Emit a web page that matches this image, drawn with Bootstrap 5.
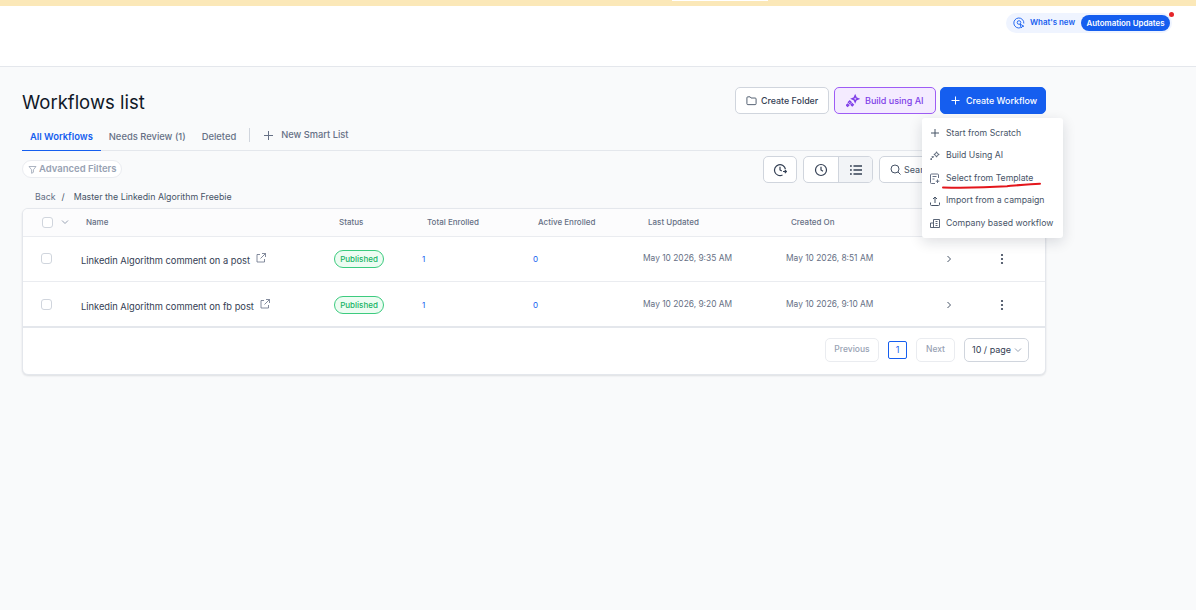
<!DOCTYPE html>
<html lang="en">
<head>
<meta charset="UTF-8">
<meta name="viewport" content="width=device-width, initial-scale=1.0">
<title>Workflows list</title>
<link href="https://cdn.jsdelivr.net/npm/bootstrap@5.3.0/dist/css/bootstrap.min.css" rel="stylesheet">
<style>
html, body { height: 100%; overflow: hidden; }
body { font-family: Inter, "Liberation Sans", sans-serif; font-size: 9px; background: #f9fafb; color: #344054; }
svg { display: block; flex: none; }
.top-strip { height: 6px; background: #fbe8b8; }
.top-strip-gap { width: 96px; height: 1px; background: #fff; margin-left: 672px; }
.app-header { height: 61px; background: #fff; border-bottom: 1px solid #e4e7ec; padding: 7px 24px 0 0; }
.news-pill { position: relative; height: 20px; width: 166px; border-radius: 10px; background: #eff4ff; padding: 0 2px 0 7px; font-size: 7.9px; font-weight: 600; color: #155eef; white-space: nowrap; }
.news-label { margin-left: 5px; }
.news-dot { position: absolute; top: -1px; right: -2px; width: 5px; height: 5px; border-radius: 50%; background: #e5252a; }
.news-tag { background: #155eef; color: #fff; border-radius: 8px; height: 16px; width: 89px; text-align: center; line-height: 16px; margin-left: auto; }
.page-body { position: relative; padding: 20px 0 0 22px; width: 1046px; }
.page-title { font-size: 18.5px; font-weight: 400; color: #101828; margin: 0; line-height: 24px; padding-top: 3px; }
.act-btn { height: 27px; border-radius: 5px; font-size: 8.9px; font-weight: 500; padding: 0 10px; display: flex; align-items: center; gap: 5px; white-space: nowrap; }
.act-light { background: #fff; border: 1px solid #d0d5dd; color: #344054; width: 94px; margin-right: 1px; gap: 4px; }
.act-ai { background: #f4ebff; border: 1px solid #9e5cf5; color: #7f3ee8; width: 102px; padding-left: 11px; font-size: 9px; }
.act-main { background: #155eef; border: 1px solid #155eef; color: #fff; width: 106px; gap: 6px; }
.tab-row { height: 25px; margin-top: 12px; border-bottom: 1px solid #e4e7ec; }
.tab-item { padding: 2px 8px 0; height: 25px; font-size: 9.4px; font-weight: 500; color: #667085; line-height: 17px; white-space: nowrap; }
.tab-on { color: #155eef; font-weight: 600; border-bottom: 1px solid #155eef; }
.tab-sep { width: 1px; height: 14px; background: #d0d5dd; margin: 2px 14px 0 5px; }
.smart-link { color: #667085; font-weight: 500; font-size: 9.3px; gap: 8px; height: 18px; }
.filter-row { height: 38px; padding-top: 5px; }
.filter-pill { height: 18px; width: 100px; border: 1px solid #eaecf0; background: #fff; border-radius: 9px; color: #98a2b3; font-size: 9.5px; font-weight: 600; gap: 2px; padding-left: 5px; margin-top: 4px; white-space: nowrap; }
.tool-box { height: 27px; border: 1px solid #d0d5dd; border-radius: 5px; background: #fff; align-items: center; justify-content: center; }
.tool-single { width: 34px; }
.tool-cell { width: 34px; height: 100%; display: flex; align-items: center; justify-content: center; }
.tool-cell + .tool-cell { background: #f2f4f7; border-left: 1px solid #d0d5dd; border-radius: 0 4px 4px 0; }
.tool-wrap { gap: 6px; }
.search-box { width: 167px; gap: 3px; padding-left: 10px; justify-content: flex-start; color: #475467; font-size: 9px; white-space: nowrap; }
.crumbs { height: 19px; padding-left: 13px; color: #475467; font-size: 8.8px; line-height: 15px; }
.crumbs .back { color: #667085; margin-right: 6px; }
.crumbs .slash { margin-right: 9px; }
.list-card { background: #fff; border: 1px solid #e4e7ec; border-radius: 6px; box-shadow: 0 1px 2px rgba(16,24,40,.12); height: 167px; overflow: hidden; }
.wf-table { table-layout: fixed; width: 1023px; border-collapse: collapse; }
.wf-table th { height: 27px; font-size: 8px; font-weight: 500; color: #667085; border-bottom: 1px solid #eaecf0; background: #fcfcfd; vertical-align: middle; }
.wf-table td { height: 45px; border-bottom: 1px solid #eaecf0; vertical-align: middle; font-size: 8.4px; color: #667085; padding: 0; }
.wf-table tr:last-child td { height: 46px; padding-top: 2px; border-bottom: 2px solid #e4e7ec; }
.wf-table td.wf-num { color: #155eef; font-size: 8px; }
.th-gap { padding-left: 5px; }
.tick { width: 11px; height: 11px; border: 1px solid #d0d5dd; border-radius: 3px; background: #fff; margin-left: 18px; }
.wf-name { font-size: 9.3px; color: #344054; gap: 6px; }
.wf-name span { padding-top: 5px; }
.wf-name svg { margin-bottom: 2px; }
.badge-pub { display: inline-block; height: 18px; width: 50px; line-height: 16px; text-align: center; border: 1px solid #3ccb7f; background: #edfcf2; border-radius: 9px; color: #16b364; font-weight: 500; font-size: 8px; }
.row-arrow { margin-left: 5px; }
.wf-table td.dots-cell { padding-left: 9px; }
.pager { height: 43px; padding-right: 16px; gap: 9px; }
.pg-btn { height: 24px; border: 1px solid #eaecf0; border-radius: 5px; color: #98a2b3; font-size: 8.5px; font-weight: 500; display: flex; align-items: center; justify-content: center; }
.pg-prev { width: 54px; }
.pg-next { width: 39px; }
.pg-num { height: 18px; width: 19px; border: 1px solid #155eef; border-radius: 2px; color: #155eef; font-size: 9px; display: flex; align-items: center; justify-content: center; }
.pg-size { height: 24px; width: 65px; border: 1px solid #d0d5dd; border-radius: 5px; color: #344054; font-size: 9px; padding-left: 7px; gap: 3px; white-space: nowrap; }
.create-menu { position: absolute; left: 922px; top: 51px; width: 141px; height: 120px; background: #fff; border-radius: 3px; box-shadow: 0 4px 14px rgba(16,24,40,.14); padding: 4px 0 0 8px; font-size: 8.7px; color: #475467; }
.menu-row { height: 22.500px; gap: 6px; white-space: nowrap; }
.create-menu .red-line { position: absolute; left: 20px; top: 64px; }
</style>
</head>
<body>
<div class="top-strip"><div class="top-strip-gap"></div></div>
<header class="app-header d-flex justify-content-end">
  <div class="news-pill d-flex align-items-center">
    <svg width="12" height="12" viewBox="0 0 12 12" fill="none" stroke="#155eef" stroke-width=".9"><path d="M7.500 10.700A5 5 0 1 1 10.800 6.500"/><circle cx="6" cy="5.500" r="1.800"/><path d="M7 7l1.200 4 1-1.400 1.600-.4z"/></svg>
    <span class="news-label">What's new</span>
    <span class="news-tag">Automation Updates</span>
    <span class="news-dot"></span>
  </div>
</header>
<main class="page-body">
  <div class="d-flex justify-content-between align-items-start">
    <h1 class="page-title">Workflows list</h1>
    <div class="d-flex gap-1">
      <button class="act-btn act-light"><svg width="11" height="11" viewBox="0 0 12 12" fill="none" stroke="#475467"><path d="M1 3a1 1 0 0 1 1-1h2.500l1 1.300H10a1 1 0 0 1 1 1V9.500a1 1 0 0 1-1 1H2a1 1 0 0 1-1-1z"/></svg>Create Folder</button>
      <button class="act-btn act-ai"><svg width="14" height="14" viewBox="0 0 13 13" fill="none" stroke="#7f3ee8" stroke-width="1.300"><path d="M8.500 1.500l.9 2.100 2.100.9-2.100.9-.9 2.100-.9-2.100-2.100-.9 2.100-.9z"/><path d="M3.500 6.500l1.200 1.200-1.200 1.200-1.200-1.200zM5.800 9l1 1-1 1-1-1zM1.500 9.500l1 1-1 1-1-1z"/></svg>Build using AI</button>
      <button class="act-btn act-main"><svg width="9" height="9" viewBox="0 0 9 9" stroke="#fff"><path d="M4.500 .5v8M.5 4.500h8"/></svg>Create Workflow</button>
    </div>
  </div>
  <div class="tab-row d-flex align-items-start">
    <div class="tab-item tab-on">All Workflows</div>
    <div class="tab-item">Needs Review (1)</div>
    <div class="tab-item">Deleted</div>
    <div class="tab-sep"></div>
    <div class="smart-link d-flex align-items-center"><svg width="9" height="9" viewBox="0 0 9 9" stroke="#667085"><path d="M4.500 0v9M0 4.500h9"/></svg>New Smart List</div>
  </div>
  <div class="filter-row d-flex justify-content-between align-items-start">
    <div class="filter-pill d-flex align-items-center"><svg width="9" height="9" viewBox="0 0 9 9" fill="none" stroke="#98a2b3" stroke-width=".8"><path d="M1 1.500h7L5.400 4.800v2.500l-1.800 1V4.800z"/></svg>Advanced Filters</div>
    <div class="d-flex tool-wrap">
      <div class="tool-box d-flex tool-single"><svg width="14" height="14" viewBox="0 0 14 14" fill="none" stroke="#344054" stroke-width="1.200"><path d="M12.400 6.200A5.500 5.500 0 1 0 9.500 12"/><path d="M7 3.800V7l1.800 1M10 8.500h3.500M11.800 6.800l1.700 1.700-1.700 1.700"/></svg></div>
      <div class="tool-box d-flex">
        <div class="tool-cell"><svg width="14" height="14" viewBox="0 0 14 14" fill="none" stroke="#344054" stroke-width="1.200"><circle cx="7" cy="7" r="5.500"/><path d="M7 3.800V7l2 1.200"/></svg></div>
        <div class="tool-cell"><svg width="12" height="10" viewBox="0 0 12 10" fill="none" stroke="#344054" stroke-width="1.400"><path d="M3.500 1h8.500M3.500 5h8.500M3.500 9h8.500M0 1h1.800M0 5h1.800M0 9h1.800"/></svg></div>
      </div>
      <div class="tool-box d-flex search-box"><svg width="11" height="11" viewBox="0 0 11 11" fill="none" stroke="#475467"><circle cx="5" cy="5" r="4"/><path d="M8 8l2.500 2.500"/></svg>Search</div>
    </div>
  </div>
  <div class="crumbs"><span class="back">Back</span><span class="slash">/</span>Master the Linkedin Algorithm Freebie</div>
  <section class="list-card">
    <table class="wf-table">
      <colgroup><col style="width:58px"><col style="width:253px"><col style="width:88px"><col style="width:111px"><col style="width:110px"><col style="width:143px"><col style="width:154px"><col style="width:51px"><col></colgroup>
      <thead><tr>
        <th><div class="d-flex align-items-center"><div class="tick"></div><svg class="ms-2" width="8" height="8" viewBox="0 0 8 8" fill="none" stroke="#98a2b3"><path d="M1 2.500l3 3 3-3"/></svg></div></th>
        <th class="th-gap">Name</th><th class="th-gap">Status</th><th class="th-gap">Total Enrolled</th><th class="th-gap">Active Enrolled</th><th class="th-gap">Last Updated</th><th class="th-gap">Created On</th><th></th><th></th>
      </tr></thead>
      <tbody>
        <tr>
          <td><div class="tick"></div></td>
          <td><div class="wf-name d-flex align-items-center"><span>Linkedin Algorithm comment on a post</span><svg width="10" height="10" viewBox="0 0 10 10" fill="none" stroke="#667085" stroke-width=".8"><path d="M4 1.500H1v7.500h7.500V6M6 .5h3.500V4M9.500 .5L4.500 5.500"/></svg></div></td>
          <td><span class="badge-pub">Published</span></td><td class="wf-num">1</td><td class="wf-num">0</td><td>May 10 2026, 9:35 AM</td><td>May 10 2026, 8:51 AM</td>
          <td><svg class="row-arrow" width="8" height="8" viewBox="0 0 8 8" fill="none" stroke="#475467"><path d="M2.500 1l3 3-3 3"/></svg></td>
          <td class="dots-cell"><svg width="4" height="12" viewBox="0 0 4 12" fill="#344054"><circle cx="2" cy="2" r="1.100"/><circle cx="2" cy="6" r="1.100"/><circle cx="2" cy="10" r="1.100"/></svg></td>
        </tr>
        <tr>
          <td><div class="tick"></div></td>
          <td><div class="wf-name d-flex align-items-center"><span>Linkedin Algorithm comment on fb post</span><svg width="10" height="10" viewBox="0 0 10 10" fill="none" stroke="#667085" stroke-width=".8"><path d="M4 1.500H1v7.500h7.500V6M6 .5h3.500V4M9.500 .5L4.500 5.500"/></svg></div></td>
          <td><span class="badge-pub">Published</span></td><td class="wf-num">1</td><td class="wf-num">0</td><td>May 10 2026, 9:20 AM</td><td>May 10 2026, 9:10 AM</td>
          <td><svg class="row-arrow" width="8" height="8" viewBox="0 0 8 8" fill="none" stroke="#475467"><path d="M2.500 1l3 3-3 3"/></svg></td>
          <td class="dots-cell"><svg width="4" height="12" viewBox="0 0 4 12" fill="#344054"><circle cx="2" cy="2" r="1.100"/><circle cx="2" cy="6" r="1.100"/><circle cx="2" cy="10" r="1.100"/></svg></td>
        </tr>
      </tbody>
    </table>
    <div class="pager d-flex justify-content-end align-items-center">
      <div class="pg-btn pg-prev">Previous</div>
      <div class="pg-num">1</div>
      <div class="pg-btn pg-next">Next</div>
      <div class="pg-size d-flex align-items-center">10 / page<svg width="8" height="8" viewBox="0 0 8 8" fill="none" stroke="#98a2b3"><path d="M1 2.500l3 3 3-3"/></svg></div>
    </div>
  </section>
  <nav class="create-menu">
    <div class="menu-row d-flex align-items-center"><svg width="10" height="10" viewBox="0 0 10 10" stroke="#475467"><path d="M5 1v8M1 5h8"/></svg><span>Start from Scratch</span></div>
    <div class="menu-row d-flex align-items-center"><svg width="10" height="10" viewBox="0 0 13 13" fill="none" stroke="#475467" stroke-width="1.200"><path d="M8.500 1l1.100 2.400L12 4.500 9.600 5.600 8.500 8 7.400 5.600 5 4.500l2.400-1.100z"/><path d="M3.500 6.500l1.200 1.200-1.200 1.200-1.200-1.200zM1.500 9.500l1 1-1 1-1-1z"/></svg><span>Build Using AI</span></div>
    <div class="menu-row d-flex align-items-center"><svg width="10" height="11" viewBox="0 0 10 11" fill="none" stroke="#667085"><path d="M8.500 5V2a1 1 0 0 0-1-1h-6a1 1 0 0 0-1 1v7.500a1 1 0 0 0 1 1H5M2.500 3.500h4M2.500 6h2"/><path d="M7.500 6.500v3.500M5.800 8.200h3.500"/></svg><span>Select from Template</span></div>
    <div class="menu-row d-flex align-items-center"><svg width="10" height="10" viewBox="0 0 10 10" fill="none" stroke="#475467"><path d="M5 7V1M3 3l2-2 2 2M.5 6.500v2a1 1 0 0 0 1 1h7a1 1 0 0 0 1-1v-2"/></svg><span>Import from a campaign</span></div>
    <div class="menu-row d-flex align-items-center"><svg width="10" height="10" viewBox="0 0 10 10" fill="none" stroke="#475467" stroke-width=".9"><path d="M.5 9.500h9M3.500 9.500V1.500h6v8M.5 9.500V5h3M5.500 3.500h2M5.500 5.500h2M5.500 7.500h2"/></svg><span>Company based workflow</span></div>
    <svg class="red-line" width="100" height="8" viewBox="0 0 100 8" fill="none" stroke="#e3161c" stroke-width="2" stroke-linecap="round"><path d="M1 5.500C25 6 45 5.500 65 4.200 78 3 90 1.800 98 1.800"/></svg>
  </nav>
</main>
</body>
</html>
